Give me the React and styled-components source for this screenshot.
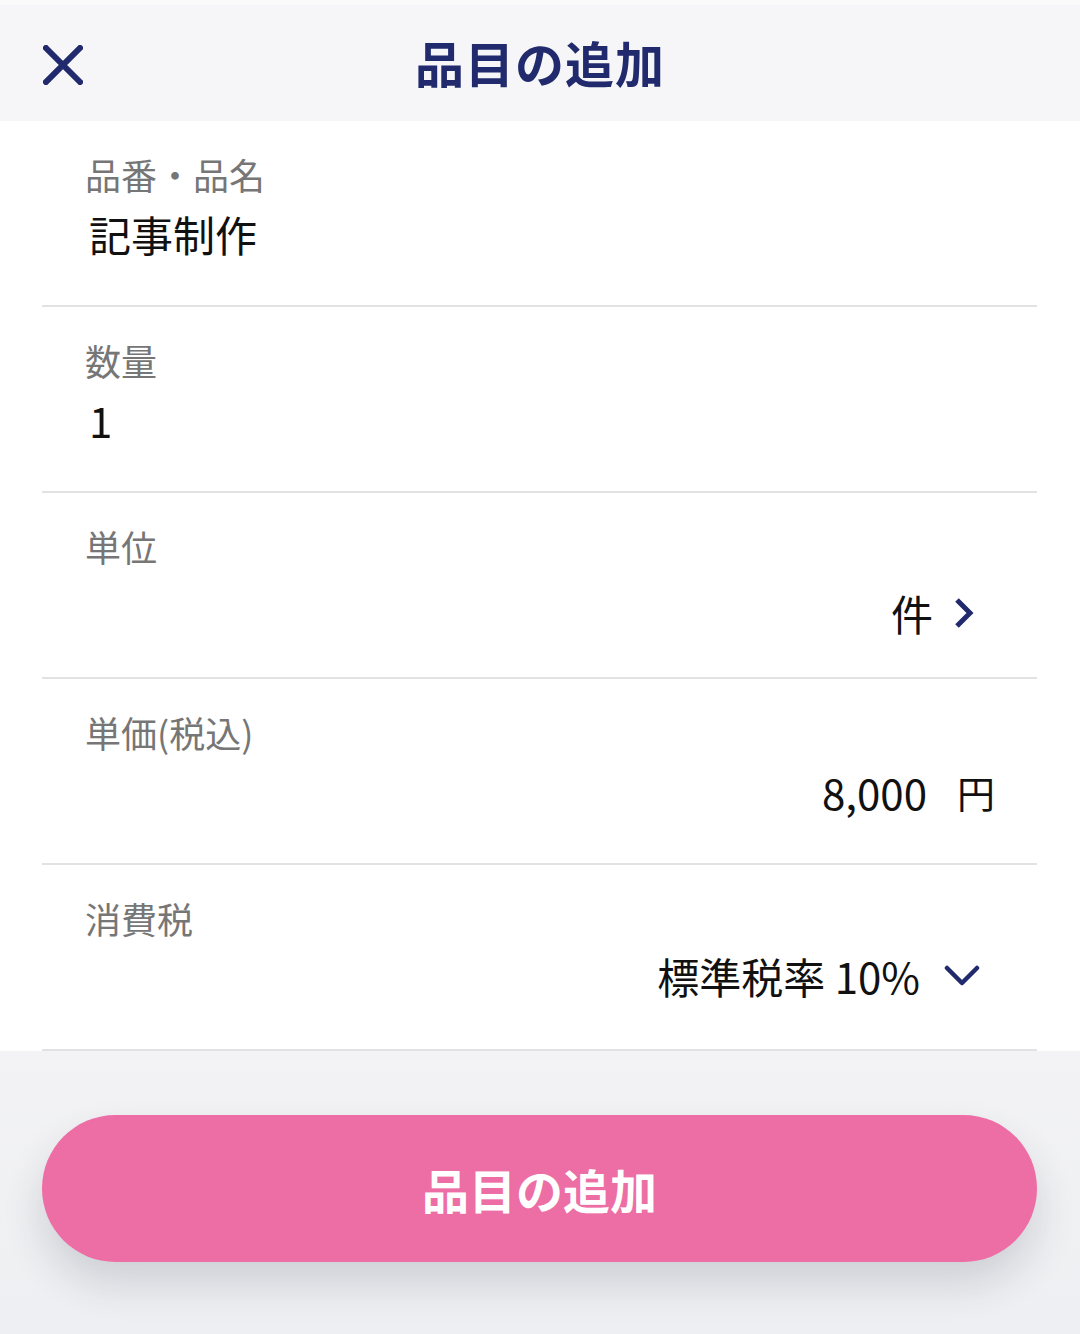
import styled, { createGlobalStyle } from "styled-components";

const GlobalStyle = createGlobalStyle`
  html, body {
    margin: 0;
    padding: 0;
    background: #f2f2f4;
  }
  body {
    font-family: "Noto Sans CJK JP", "Noto Sans", sans-serif;
  }
`;

const NAVY = "#202a6c";

const rows = [
  { label: "品番・品名", value: "記事制作", align: "left" },
  { label: "数量", value: "1", align: "left" },
  { label: "単位", value: "件", align: "right", icon: "chevronRight", pr: 63, gap: 21, top: 12 },
  { label: "単価(税込)", value: "8,000", unit: "円", align: "right", pr: 42 },
  { label: "消費税", value: "標準税率 10%", align: "right", icon: "chevronDown", pr: 57, gap: 24, top: 3 },
];

const CloseIcon = () => (
  <svg width="40" height="40" viewBox="0 0 40 40">
    <path d="M3 3 L37 37 M37 3 L3 37" stroke={NAVY} strokeWidth="6" strokeLinecap="square" fill="none" />
  </svg>
);

const ChevronRight = () => (
  <svg width="20" height="32" viewBox="0 0 20 32">
    <path d="M3 3 L16 16 L3 29" stroke={NAVY} strokeWidth="5" fill="none" strokeLinejoin="miter" />
  </svg>
);

const ChevronDown = () => (
  <svg width="36" height="24" viewBox="0 0 36 24">
    <path d="M3 4 L18 19 L33 4" stroke={NAVY} strokeWidth="4.5" fill="none" strokeLinecap="round" strokeLinejoin="round" />
  </svg>
);

const App = () => {
  return (
    <Page>
      <GlobalStyle />
      <StatusStrip />
      <Header>
        <CloseButton>
          <CloseIcon />
        </CloseButton>
        <Title>品目の追加</Title>
      </Header>
      <Form>
        {rows.map(({ label, value, unit, align, icon, pr, gap, top }, index) => (
          <Row key={index}>
            <Label>{label}</Label>
            <Value align={align} pr={pr} top={top}>
              <span>{value}</span>
              {unit && <Unit>{unit}</Unit>}
              {icon === "chevronRight" && (
                <IconBox gap={gap}>
                  <ChevronRight />
                </IconBox>
              )}
              {icon === "chevronDown" && (
                <IconBox gap={gap}>
                  <ChevronDown />
                </IconBox>
              )}
            </Value>
          </Row>
        ))}
      </Form>
      <Footer>
        <SubmitButton>品目の追加</SubmitButton>
      </Footer>
    </Page>
  );
};

const Page = styled.div`
  width: 1080px;
  height: 1334px;
  display: flex;
  flex-direction: column;
  background: #f2f2f4;
  overflow: hidden;
`;

const StatusStrip = styled.div`
  height: 5px;
  background: #fafafb;
`;

const Header = styled.div`
  height: 116px;
  background: #f6f6f8;
  display: flex;
  align-items: center;
  justify-content: center;
  position: relative;
`;

const CloseButton = styled.div`
  position: absolute;
  left: 43px;
  top: 40px;
  width: 40px;
  height: 40px;
`;

const Title = styled.div`
  font-size: 49px;
  font-weight: 700;
  color: ${NAVY};
  letter-spacing: 1px;
  margin-top: -4px;
`;

const Form = styled.div`
  background: #ffffff;
  padding: 0 43px 0 42px;
`;

const Row = styled.div`
  border-bottom: 2px solid #e2e2e4;
  padding-top: 28px;
  height: 156px;
`;

const Label = styled.div`
  font-size: 36px;
  line-height: 50px;
  color: #767676;
  padding-left: 43px;
`;

const Value = styled.div`
  margin-top: ${({ top }) => top || 5}px;
  display: flex;
  align-items: center;
  justify-content: ${({ align }) => (align === "right" ? "flex-end" : "flex-start")};
  padding-left: 47px;
  padding-right: ${({ pr }) => (pr ? `${pr}px` : "0")};
  font-size: 42px;
  line-height: 60px;
  color: #111111;
`;

const Unit = styled.span`
  margin-left: 30px;
  font-size: 38px;
`;

const IconBox = styled.span`
  display: flex;
  align-items: center;
  margin-left: ${({ gap }) => gap || 24}px;
`;

const Footer = styled.div`
  flex: 1;
  padding: 64px 43px 0 42px;
  background: linear-gradient(#f3f3f5, #eeeff2);
`;

const SubmitButton = styled.div`
  height: 147px;
  border-radius: 74px;
  background: #ec6ea4;
  color: #ffffff;
  font-size: 47px;
  font-weight: 700;
  display: flex;
  align-items: center;
  justify-content: center;
  box-shadow: 0 22px 40px rgba(40, 44, 60, 0.16);
`;

export default App;
